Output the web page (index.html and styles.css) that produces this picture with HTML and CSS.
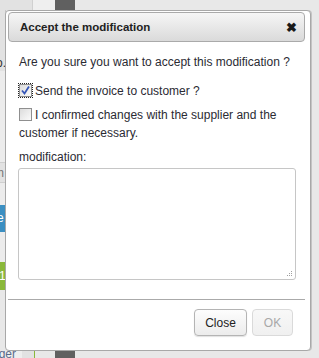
FILE: index.html
```html
<!DOCTYPE html>
<html lang="en">
<head>
  <meta charset="UTF-8">
  <title>Accept the modification</title>
  <link rel="stylesheet" href="styles.css">
</head>
<body>
<div class="page">
  <div class="top-strip">
    <span class="seg seg-a"></span>
    <span class="seg seg-b"></span>
    <span class="seg seg-dark"></span>
    <span class="seg seg-rest"></span>
  </div>
  <div class="side">
    <div class="side-row side-head"></div>
    <div class="side-row side-text">o.</div>
    <div class="side-row side-gap1"></div>
    <div class="side-row side-cell">m</div>
    <div class="side-row side-gap2"></div>
    <div class="side-row side-blue">e</div>
    <div class="side-row side-gap3"></div>
    <div class="side-row side-green">1</div>
  </div>
  <div class="bottom-strip">
    <span class="seg bot-text">ider</span>
    <span class="seg bot-b"></span>
    <span class="seg bot-green"></span>
    <span class="seg bot-c"></span>
    <span class="seg seg-dark"></span>
    <span class="seg seg-rest"></span>
  </div>
</div>

<div class="dialog">
  <div class="dialog-title">
    <span>Accept the modification</span>
    <span class="dialog-close">&#10006;</span>
  </div>
  <div class="dialog-content">
    <p class="line">Are you sure you want to accept this modification ?</p>
    <label class="check-line">
      <span class="cbox checked focused">
        <svg width="11" height="11" viewBox="0 0 11 11"><path d="M2 5.5 L4.5 8.5 L9 1.5" fill="none" stroke="#3556b8" stroke-width="1.8"/></svg>
      </span>Send the invoice to customer ?
    </label>
    <label class="check-line wrap">
      <span class="cbox"></span>I confirmed changes with the supplier and the customer if necessary.
    </label>
    <p class="line field-label">modification:</p>
    <div class="area-wrap">
      <textarea class="area"></textarea>
      <svg class="grip" width="7" height="7" viewBox="0 0 7 7">
        <rect x="5" y="1" width="1" height="1"/>
        <rect x="3" y="3" width="1" height="1"/><rect x="5" y="3" width="1" height="1"/>
        <rect x="1" y="5" width="1" height="1"/><rect x="3" y="5" width="1" height="1"/><rect x="5" y="5" width="1" height="1"/>
      </svg>
    </div>
  </div>
  <div class="dialog-buttons">
    <button class="btn btn-close">Close</button>
    <button class="btn" disabled>OK</button>
  </div>
</div>
</body>
</html>
```

FILE: styles.css
```css
* {
  box-sizing: border-box;
  margin: 0;
  padding: 0;
}

body {
  font-family: "Liberation Sans", Arial, sans-serif;
  font-size: 12px;
  color: #2b2b33;
  background: #e8e8e8;
  width: 319px;
  height: 358px;
  overflow: hidden;
  position: relative;
}

.page {
  height: 358px;
  display: flex;
  flex-direction: column;
}

.top-strip,
.bottom-strip {
  display: flex;
  height: 10px;
}

.bottom-strip {
  height: 7px;
  margin-top: auto;
}

.seg {
  display: block;
  height: 100%;
}

.seg-a { width: 33px; background: #e2e2e2; border-right: 1px solid #d0d0d0; }
.seg-b { width: 22px; background: #efefef; }
.seg-dark { width: 20px; background: #606060; }
.seg-rest { flex: 1; background: #e8e8e8; }

.bot-text {
  width: 22px;
  background: #eeeeee;
  color: #5a6a8a;
  font-size: 12px;
  line-height: 7px;
  overflow: hidden;
  text-indent: -4px;
}
.bot-b { width: 12px; background: #e2e2e2; }
.bot-green { width: 1px; background: #8ab83a; }
.bot-c { width: 20px; background: #e8e8e8; }

.side {
  width: 6px;
  display: flex;
  flex-direction: column;
  overflow: hidden;
}

.side-row {
  background: #e2e2e2;
  border-right: 1px solid #c8c8c8;
  font-size: 12px;
  overflow: hidden;
  white-space: nowrap;
}

.side-head { height: 45px; }
.side-text { height: 16px; line-height: 16px; color: #333; text-indent: -4px; }
.side-gap1 { height: 92px; background: #ececec; border-bottom: 1px solid #cfcfcf; }
.side-cell { height: 20px; line-height: 20px; color: #777; text-indent: -6px; border-bottom: 1px solid #cfcfcf; }
.side-gap2 { height: 22px; background: #ececec; }
.side-blue { height: 27px; line-height: 27px; background: #3b8fc2; color: #fff; text-indent: -3px; }
.side-gap3 { height: 30px; background: #ececec; }
.side-green { height: 28px; line-height: 28px; background: #8ab83a; color: #fff; text-indent: -1px; }

/* dialog over the page */
.dialog {
  position: absolute;
  left: 5px;
  top: 10px;
  width: 306px;
  height: 341px;
  background: #fff;
  border: 1px solid #a8a8a8;
  border-radius: 4px;
  padding: 1px 5px 0 2px;
  display: flex;
  flex-direction: column;
  box-shadow: 1px 0 0 #c4c4c4;
}

.dialog-title {
  height: 30px;
  display: flex;
  align-items: center;
  justify-content: space-between;
  padding: 0 7px 0 11px;
  border: 1px solid #aaaaaa;
  border-radius: 4px;
  background: linear-gradient(#f6f6f6, #dadada);
  font-weight: bold;
  font-size: 11.5px;
  color: #222;
}

.dialog-close {
  font-size: 13px;
  color: #1a1a1a;
}

.dialog-content {
  padding: 11px 8px 0 11px;
  flex: 1;
}

.line {
  line-height: 18px;
}

.check-line {
  display: block;
  line-height: 18px;
  margin-top: 11px;
}

.check-line.wrap {
  margin-top: 6px;
}

.cbox {
  display: inline-block;
  width: 13px;
  height: 13px;
  border: 1px solid #8f8f8f;
  background: linear-gradient(135deg, #dcdcdc, #fbfbfb);
  vertical-align: -2px;
  margin-right: 3px;
  position: relative;
}

.cbox svg {
  position: absolute;
  left: 0;
  top: 0;
}

.cbox.focused {
  outline: 1px dotted #222;
  outline-offset: 0;
}

.field-label {
  margin-top: 6px;
}

.area-wrap {
  position: relative;
  margin-top: 2px;
  margin-left: -1px;
  width: 278px;
  height: 112px;
}

.area {
  display: block;
  width: 100%;
  height: 100%;
  border: 1px solid #c6c6c6;
  border-radius: 3px;
  resize: none;
  background: #fff;
}

.grip {
  position: absolute;
  right: 3px;
  bottom: 3px;
  fill: #a0a0a0;
}

.dialog-buttons {
  border-top: 1px solid #aaaaaa;
  height: 51px;
  display: flex;
  justify-content: flex-end;
  align-items: flex-start;
  gap: 5px;
  padding: 9px 12px 0 0;
}

.btn {
  height: 27px;
  border: 1px solid #c4c4c4;
  border-radius: 4px;
  background: linear-gradient(#fdfdfd, #ececec);
  font-family: "Liberation Sans", Arial, sans-serif;
  font-size: 12px;
  color: #222;
  padding: 0 10px;
}

.btn-close {
  width: 53px;
  border-color: #b4b4b4;
  box-shadow: 0 1px 1px rgba(0, 0, 0, 0.12);
}

.btn[disabled] {
  width: 41px;
  color: #a8a8a8;
  border-color: #dadada;
  background: linear-gradient(#f8f8f8, #f0f0f0);
}
```
